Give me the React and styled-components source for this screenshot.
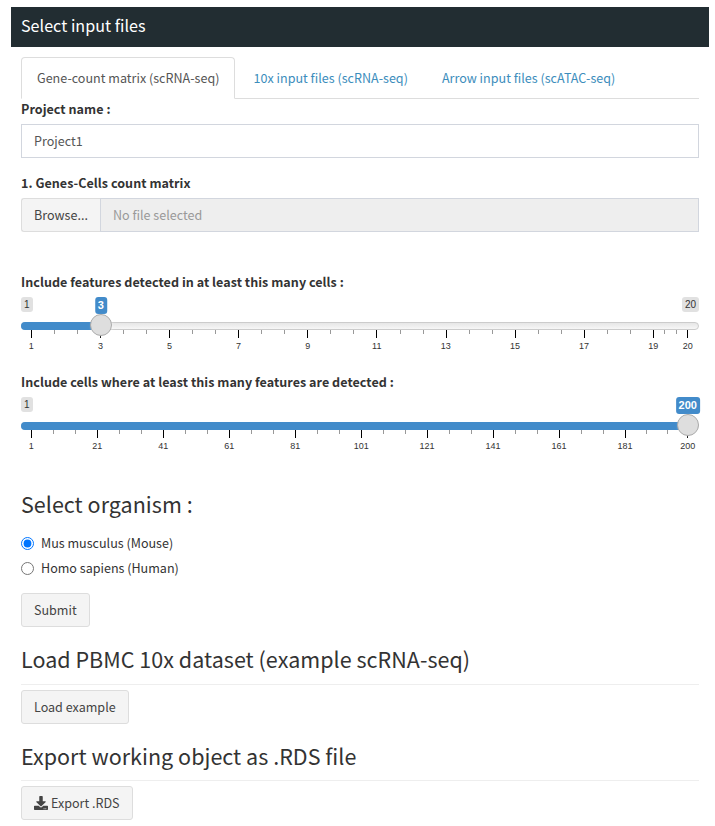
import React, { useState } from 'react';
import styled, { createGlobalStyle } from 'styled-components';

const GlobalStyle = createGlobalStyle`
  *, *::before, *::after { box-sizing: border-box; }
  body {
    margin: 0;
    background: #fff;
    color: #333;
    font-family: "Noto Sans CJK SC", "Source Sans Pro", sans-serif;
    font-size: 12.55px;
    line-height: 20px;
  }
`;

const Page = styled.main`
  width: 715px;
  height: 826px;
  padding: 7px 6px 0 11px;
  overflow: hidden;
`;

const Header = styled.header`
  height: 40px;
  padding: 0 10px;
  background: #222d32;
  color: #fff;
  font-size: 16.1px;
  letter-spacing: 0.03px;
  line-height: 36px;
`;

const Body = styled.div`
  display: flex;
  flex-direction: column;
  align-items: stretch;
  padding: 10px 10px 0;
`;

const Tabs = styled.nav`
  display: flex;
  gap: 2px;
  height: 42px;
  border-bottom: 1px solid #ddd;
`;

const Tab = styled.a`
  height: 42px;
  padding: 10px 15px 0;
  border: 1px solid ${(p) => (p.$active ? '#ddd' : 'transparent')};
  border-bottom-color: ${(p) => (p.$active ? '#fff' : 'transparent')};
  border-radius: 4px 4px 0 0;
  color: ${(p) => (p.$active ? '#555' : '#3c8dbc')};
  letter-spacing: 0.01px;
  text-decoration: none;
  white-space: nowrap;
  cursor: pointer;
`;

const Label = styled.label`
  display: block;
  height: 20px;
  margin-bottom: 5px;
  font-weight: 700;
  letter-spacing: 0.035px;
  white-space: nowrap;
`;

const Field = styled.div`
  display: flex;
  flex-direction: column;
  margin-bottom: ${(p) => p.$gap}px;
`;

const TextInput = styled.input`
  width: 100%;
  height: 34px;
  padding: 5px 12px 7px;
  border: 1px solid #d2d6de;
  border-radius: 0;
  outline: none;
  background: #fff;
  color: #555;
  font: inherit;
`;

const FileRow = styled.div`
  display: flex;
  height: 34px;
`;

const BrowseButton = styled.button`
  width: 79px;
  padding: 0 0 0 12px;
  border: 1px solid #ddd;
  border-right: 0;
  border-radius: 3px 0 0 3px;
  background: #f4f4f4;
  color: #444;
  font: inherit;
  text-align: left;
`;

const FileName = styled.div`
  flex: 1;
  padding: 6px 12px;
  border: 1px solid #d2d6de;
  background: #eee;
  color: #999;
`;

const Slider = styled.div`
  position: relative;
  height: 60px;
  font-family: "Liberation Sans", Arial, sans-serif;
`;

const Limits = styled.div`
  display: flex;
  justify-content: space-between;
  height: 25px;
`;

const Limit = styled.span`
  height: 15px;
  padding: 1px 3px;
  border-radius: 3px;
  background: #e1e1e1;
  color: #333;
  font-size: 10px;
  line-height: 13px;
  visibility: ${(p) => (p.$hidden ? 'hidden' : 'visible')};
`;

const Track = styled.div`
  height: 8px;
  border: 1px solid #ccc;
  border-radius: 8px;
  background: linear-gradient(#dedede -50%, #fff 150%);
`;

const Fill = styled.div`
  position: absolute;
  top: 25px;
  left: 0;
  height: 8px;
  border-radius: 8px 0 0 8px;
  background: #428bca;
`;

const Handle = styled.div`
  position: absolute;
  top: 17px;
  width: 22px;
  height: 22px;
  margin-left: -11px;
  border: 1px solid #ababab;
  border-radius: 50%;
  background: #dedede;
  box-shadow: 1px 1px 3px rgba(255, 255, 255, 0.3);
`;

const Bubble = styled.div`
  position: absolute;
  top: 0;
  height: 17px;
  padding: 1px 3px;
  border-radius: 3px;
  background: #428bca;
  color: #fff;
  font-size: 11px;
  font-weight: 700;
  line-height: 15px;
  transform: translateX(calc(0.3px - 50%));
`;

const Scale = styled.div`
  position: relative;
  height: 27px;
  margin: 0 11.6px 0 10px;
`;

const Tick = styled.i`
  position: absolute;
  top: 0;
  width: 1px;
  height: ${(p) => (p.$major ? 8 : 4)}px;
  background: ${(p) => (p.$major ? '#000' : '#999')};
`;

const TickLabel = styled.span`
  position: absolute;
  top: 10px;
  color: #333;
  font-size: 9px;
  line-height: 13px;
  transform: translateX(calc(0.3px - 50%));
`;

const Heading = styled.h3`
  height: 26.4px;
  margin: 20px 0 0;
  font-size: 21.5px;
  font-weight: 400;
  letter-spacing: 0.03px;
  line-height: 24px;
  white-space: nowrap;
`;

const Divider = styled.hr`
  width: 100%;
  height: 1px;
  margin: 10px 0 5px;
  border: 0;
  background: #eee;
`;

const Radios = styled.div`
  display: flex;
  flex-direction: column;
  gap: 5px;
  margin: 15px 0;
`;

const RadioLabel = styled.label`
  display: flex;
  align-items: center;
  height: 20px;
  white-space: nowrap;
`;

const Radio = styled.input`
  width: 13px;
  height: 13px;
  margin: 0 7px 0 0;
  accent-color: #0075ff;
`;

const Button = styled.button`
  display: flex;
  align-items: center;
  align-self: flex-start;
  width: ${(p) => p.$width}px;
  height: 34px;
  padding: 0 0 0 12px;
  border: 1px solid #ddd;
  border-radius: 3px;
  background: #f4f4f4;
  color: #444;
  font: inherit;
  white-space: nowrap;
`;

const Icon = styled.svg`
  width: 14px;
  height: 14px;
  margin-right: 3px;
  fill: #444;
`;

function RangeSlider({ min, max, value, major }) {
  const span = max - min;
  const at = (v) => ((v - min) / span) * 100;
  const majors = [];
  for (let v = min; v < max; v += major) majors.push(v);
  majors.push(max);
  const minors = majors
    .slice(0, -1)
    .flatMap((v, i) => [1, 2].map((n) => v + ((majors[i + 1] - v) * n) / 3));
  const center = `calc(10.5px + (100% - 22px) * ${at(value) / 100})`;

  return (
    <Slider>
      <Limits>
        <Limit>{min}</Limit>
        <Limit $hidden={value === max}>{max}</Limit>
      </Limits>
      <Track />
      <Fill style={{ width: center }} />
      <Scale>
        {minors.map((v) => (
          <Tick key={v} style={{ left: `${at(v)}%` }} />
        ))}
        {majors.map((v) => (
          <React.Fragment key={v}>
            <Tick $major style={{ left: `${at(v)}%` }} />
            <TickLabel style={{ left: `${at(v)}%` }}>{v}</TickLabel>
          </React.Fragment>
        ))}
      </Scale>
      <Bubble style={{ left: center }}>{value}</Bubble>
      <Handle style={{ left: center }} />
    </Slider>
  );
}

const TABS = ['Gene-count matrix (scRNA-seq)', '10x input files (scRNA-seq)', 'Arrow input files (scATAC-seq)'];
const ORGANISMS = ['Mus musculus (Mouse)', 'Homo sapiens (Human)'];

export default function App() {
  const [tab, setTab] = useState(0);
  const [organism, setOrganism] = useState(0);
  return (
    <Page>
      <GlobalStyle />
      <Header>Select input files</Header>
      <Body>
        <Tabs>
          {TABS.map((t, i) => (
            <Tab key={t} $active={i === tab} onClick={() => setTab(i)}>{t}</Tab>
          ))}
        </Tabs>
        <Field $gap={15}>
          <Label>Project name :</Label>
          <TextInput defaultValue="Project1" />
        </Field>
        <Field $gap={40}>
          <Label>1. Genes-Cells count matrix</Label>
          <FileRow>
            <BrowseButton>Browse...</BrowseButton>
            <FileName>No file selected</FileName>
          </FileRow>
        </Field>
        <Field $gap={15}>
          <Label>Include features detected in at least this many cells :</Label>
          <RangeSlider min={1} max={20} value={3} major={2} />
        </Field>
        <Field $gap={15}>
          <Label>Include cells where at least this many features are detected :</Label>
          <RangeSlider min={1} max={200} value={200} major={20} />
        </Field>
        <Heading>Select organism :</Heading>
        <Radios>
          {ORGANISMS.map((o, i) => (
            <RadioLabel key={o}>
              <Radio type="radio" name="organism" checked={i === organism} onChange={() => setOrganism(i)} />
              {o}
            </RadioLabel>
          ))}
        </Radios>
        <Button $width={69}>Submit</Button>
        <Heading>Load PBMC 10x dataset (example scRNA-seq)</Heading>
        <Divider />
        <Button $width={108}>Load example</Button>
        <Heading>Export working object as .RDS file</Heading>
        <Divider />
        <Button $width={112}>
          <Icon viewBox="0 0 512 512">
            <path d="M216 0h80c13.300 0 24 10.700 24 24v168h87.700c17.800 0 26.700 21.500 14.100 34.100L269.700 378.300c-7.500 7.500-19.800 7.500-27.300 0L90.100 226.100c-12.600-12.600-3.700-34.100 14.100-34.100H192V24c0-13.300 10.700-24 24-24zm296 376v112c0 13.300-10.700 24-24 24H24c-13.300 0-24-10.700-24-24V376c0-13.300 10.700-24 24-24h146.700l49 49c20.100 20.100 52.500 20.100 72.600 0l49-49H488c13.300 0 24 10.700 24 24zm-124 88c0-11-9-20-20-20s-20 9-20 20 9 20 20 20 20-9 20-20zm64 0c0-11-9-20-20-20s-20 9-20 20 9 20 20 20 20-9 20-20z" />
          </Icon>
          Export .RDS
        </Button>
      </Body>
    </Page>
  );
}
